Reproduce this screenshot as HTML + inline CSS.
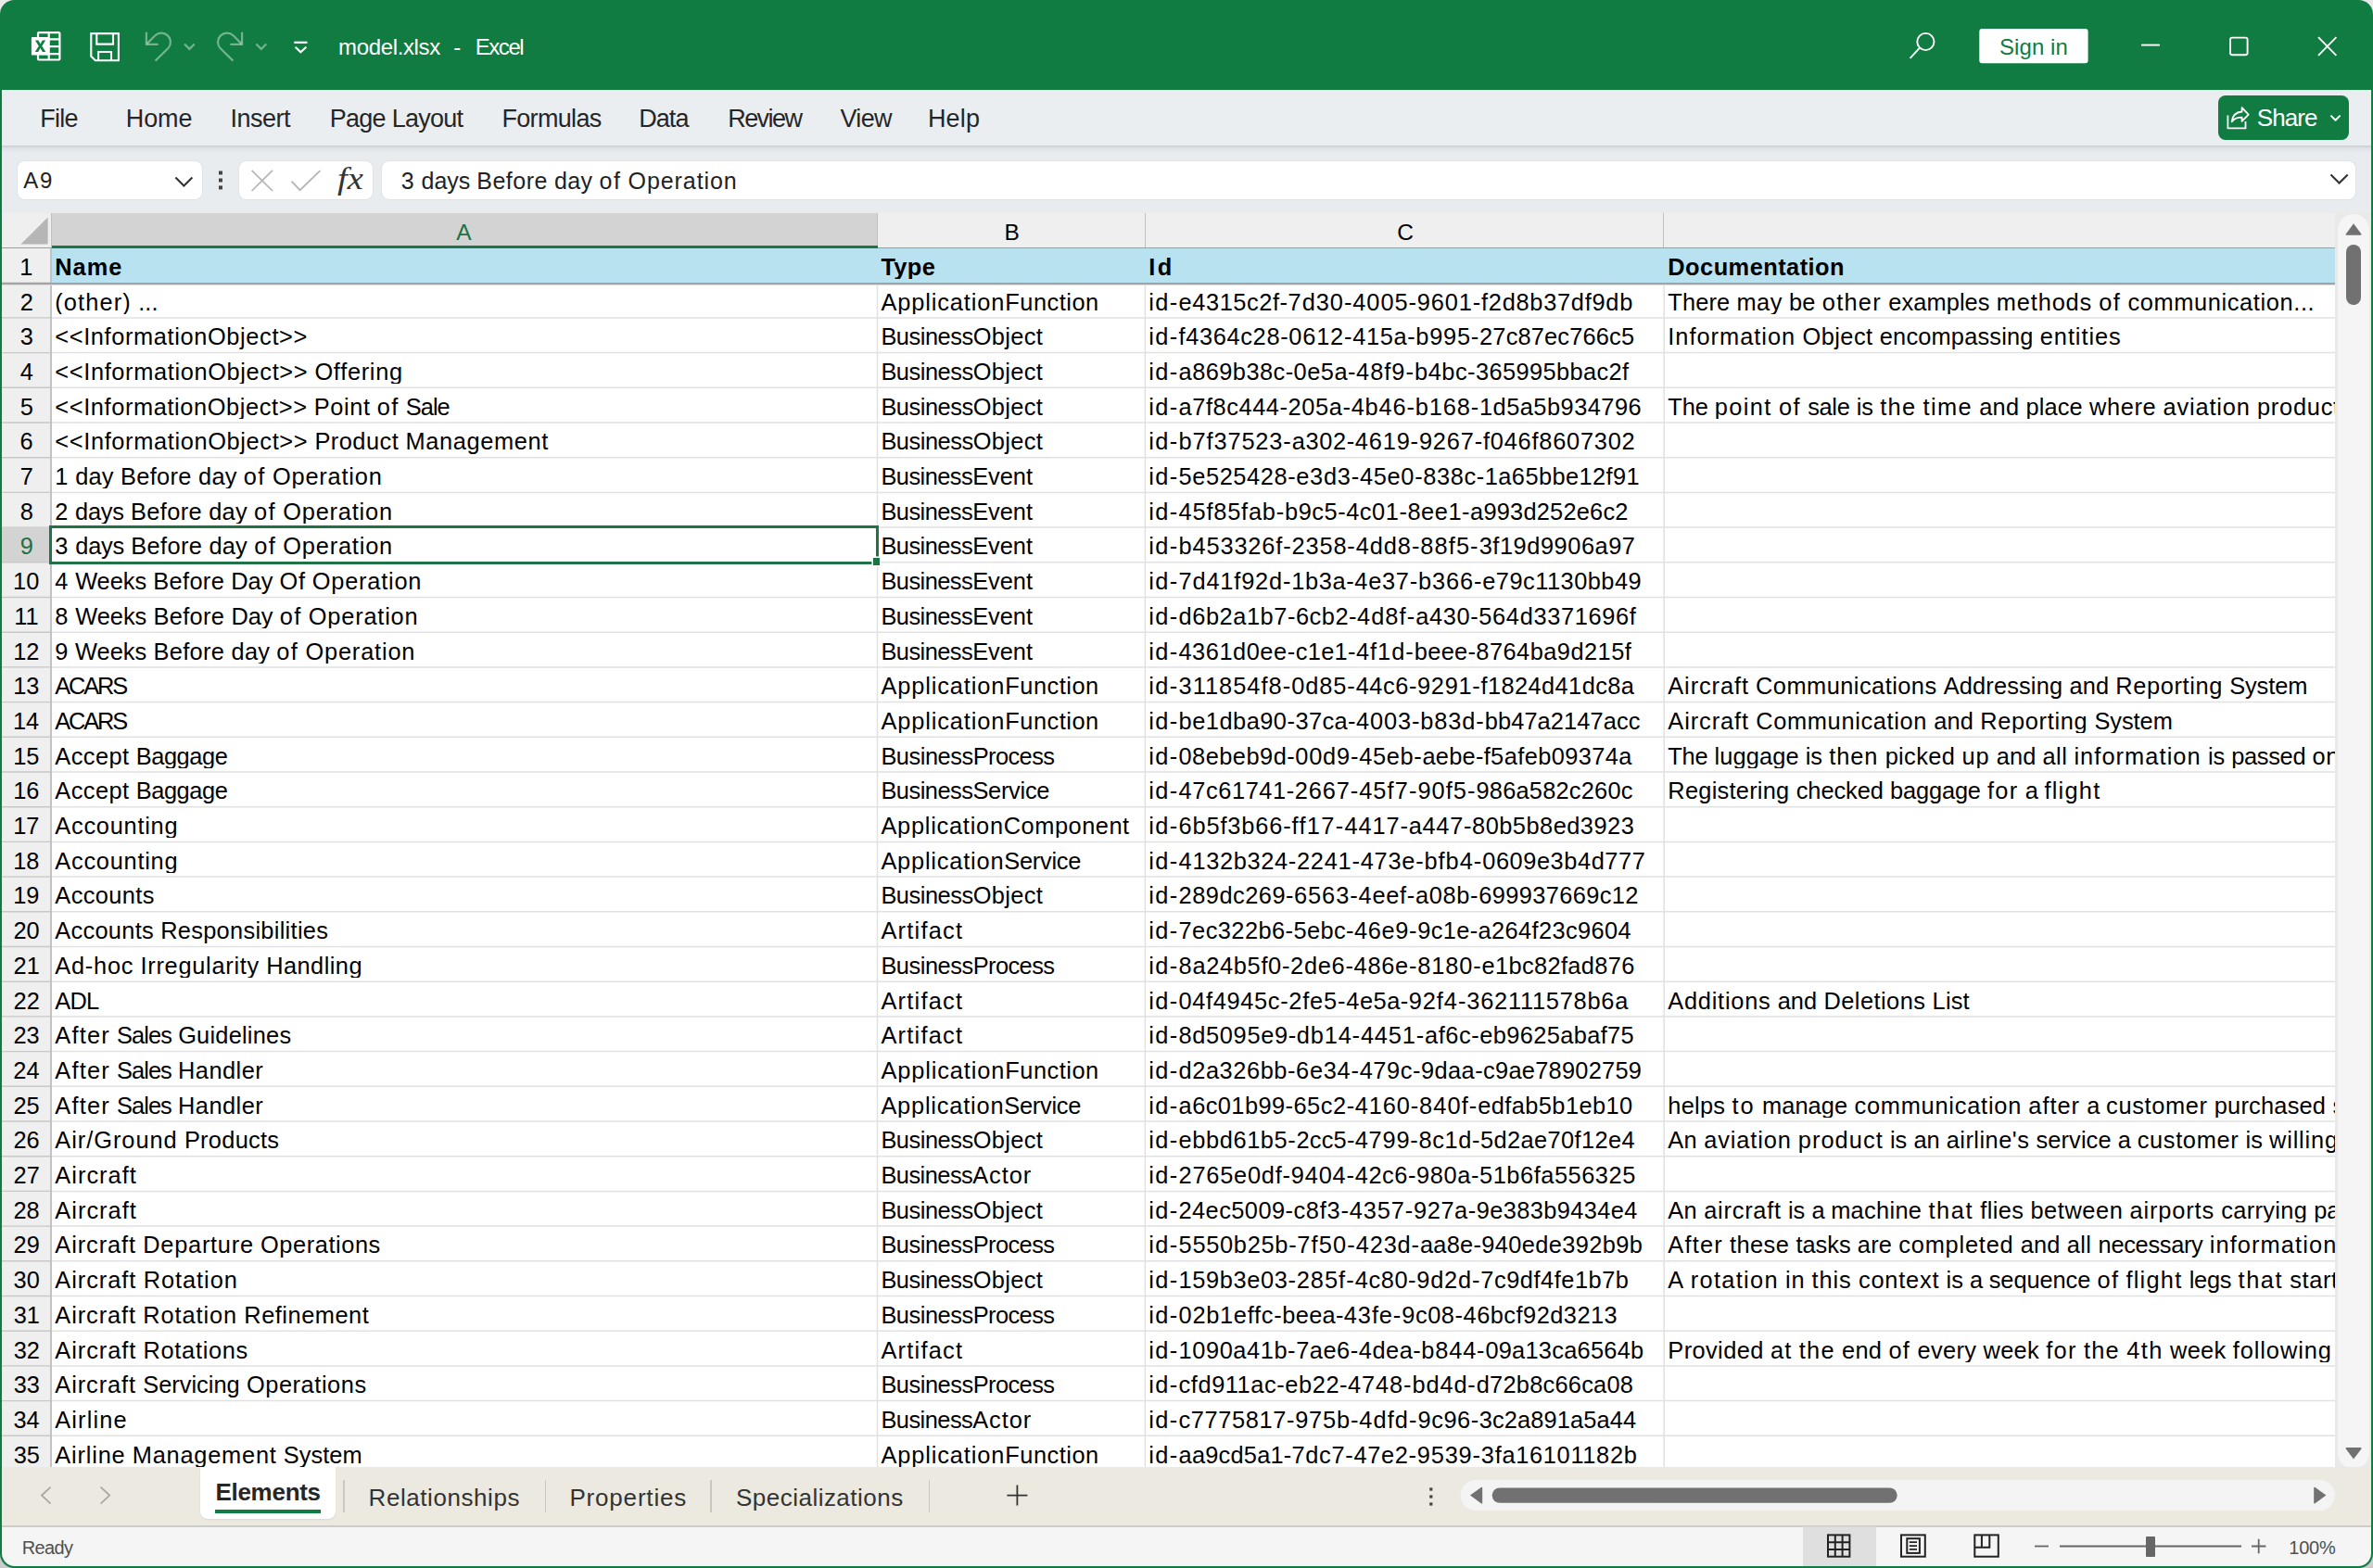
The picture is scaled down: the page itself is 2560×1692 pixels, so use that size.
<!DOCTYPE html>
<html><head><meta charset="utf-8"><title>model.xlsx - Excel</title>
<style>
html,body{margin:0;padding:0;}
body{width:2560px;height:1692px;overflow:hidden;background:linear-gradient(#e9e9e9,#e9e9e9 50%,#cbcbcb 50%);font-family:"Liberation Sans", sans-serif;position:relative;}
.win{position:absolute;left:0;top:0;width:2560px;height:1692px;border-radius:15.5px;overflow:hidden;background:#107c41;}
.t{position:absolute;white-space:pre;line-height:1;font-family:"Liberation Sans", sans-serif;}
svg{position:absolute;overflow:visible;}
</style></head>
<body><div class="win">
<div style="position:absolute;left:2px;top:97px;width:2556px;height:133px;background:#ebeef1;"></div>
<div style="position:absolute;left:2px;top:157px;width:2556px;height:8px;background:linear-gradient(#cbcfd3,#dfe2e6 40%,#e9ecef);"></div>
<div style="position:absolute;left:2px;top:165px;width:2556px;height:65px;background:#e9ecef;"></div>
<svg style="left:0;top:0" width="400" height="97" viewBox="0 0 400 97" fill="none">
<!-- excel icon -->
<g stroke="#fff" stroke-width="2.2">
<rect x="41" y="35.1" width="23.4" height="29.4" rx="1"/>
<line x1="52.7" y1="35" x2="52.7" y2="65"/>
<line x1="41" y1="42.3" x2="64" y2="42.3"/>
<line x1="41" y1="50.2" x2="64" y2="50.2"/>
<line x1="41" y1="58.2" x2="64" y2="58.2"/>
</g>
<rect x="33.9" y="39.9" width="18.9" height="19.6" rx="1" fill="#fff"/>
<path d="M38 43.6 L41.4 43.6 L43.6 47.6 L45.8 43.6 L49.1 43.6 L45.3 49.7 L49.3 56 L45.9 56 L43.5 51.8 L41.2 56 L37.8 56 L41.8 49.8 Z" fill="#107c41"/>
<!-- save icon -->
<g stroke="#fff" stroke-width="2.1">
<path d="M98.3 36.1 H127.9 V65.3 H102.9 L98.3 60.7 Z"/>
<path d="M104.3 36 V47.6 H122 V36"/>
<path d="M106.1 65.3 V56 H120 V65.3"/>
</g>
<!-- undo -->
<g stroke="#fff" stroke-opacity="0.42" stroke-width="2.2">
<path d="M157.9 34.8 V47.8 H170.6"/>
<path d="M158.6 47.1 L167.4 38.3 A9.8 9.8 0 0 1 181.4 52 L167.6 65.6"/>
<path d="M199 47.5 L204.4 52.9 L209.8 47.5"/>
<path d="M261.1 34.8 V47.8 H248.4"/>
<path d="M260.4 47.1 L251.6 38.3 A9.8 9.8 0 0 0 237.6 52 L251.4 65.6"/>
<path d="M276.4 47.5 L281.8 52.9 L287.2 47.5"/>
</g>
<!-- customize -->
<g stroke="#fff" stroke-width="2.2">
<path d="M317.3 45.8 H331.5"/>
<path d="M318.6 50.8 L324.4 56.2 L330.3 50.8"/>
</g>
</svg>
<svg style="left:2040px;top:0" width="520" height="97" viewBox="2040 0 520 97" fill="none">
<g stroke="#fff" stroke-width="1.9">
<circle cx="2077.4" cy="45" r="9.1"/>
<path d="M2071 51.6 L2060.6 62.8"/>
<path d="M2310 48.6 H2330"/>
<rect x="2406" y="40.6" width="18.6" height="18.6" rx="2.2"/>
<path d="M2501 40.2 L2520.4 59.8 M2520.4 40.2 L2501 59.8"/>
</g>
<rect x="2135.3" y="30.9" width="117.3" height="37.3" rx="3" fill="#fff"/>
</svg>
<div style="position:absolute;left:2393px;top:103px;width:141px;height:48px;background:#107c41;border-radius:8px;"></div>
<svg style="left:2393px;top:103px" width="141" height="48" viewBox="2393 103 141 48" fill="none">
<g stroke="#fff" stroke-width="1.8" stroke-linejoin="round">
<path d="M2403.4 124.4 V138.4 H2422.5 V131"/>
<path d="M2418.6 116.1 L2425.7 123.6 L2418.6 130.9 V126.7 C2413.6 126.7 2409.9 128.3 2407.6 131.4 C2408.2 125.3 2412.1 121.1 2418.6 120.5 Z"/>
<path d="M2514.4 124.6 L2519.5 129.7 L2524.6 124.6" stroke-width="2"/>
</g></svg>
<div style="position:absolute;left:18.5px;top:173.5px;width:199px;height:41.5px;background:#fff;border-radius:8px;box-shadow:0 0 0 1px #dfe2e6;"></div>
<div style="position:absolute;left:258px;top:173.5px;width:144px;height:41.5px;background:#fff;border-radius:8px;box-shadow:0 0 0 1px #dfe2e6;"></div>
<div style="position:absolute;left:411.6px;top:173.5px;width:2129.7px;height:41.5px;background:#fff;border-radius:8px;box-shadow:0 0 0 1px #dfe2e6;"></div>
<svg style="left:0;top:157px" width="2560" height="73" viewBox="0 157 2560 73" fill="none">
<path d="M189.4 191.4 L198.4 200.4 L207.4 191.4" stroke="#333" stroke-width="2.1"/>
<g fill="#444"><rect x="236" y="184.5" width="4" height="4"/><rect x="236" y="192.5" width="4" height="4"/><rect x="236" y="200.4" width="4" height="4"/></g>
<g stroke="#b4b4b4" stroke-width="1.7">
<path d="M271.6 183.9 L294 206 M294 183.9 L271.6 206"/>
<path d="M314.6 195.6 L323.6 205.2 L345.4 184.2"/>
</g>
<path d="M2514.5 188.4 L2523.6 197.5 L2532.7 188.4" stroke="#333" stroke-width="2.1"/>
</svg>
<div class="t" style="left:363.5px;top:176.81px;font-size:33px;color:#333;font-style:italic;font-family:'Liberation Serif',serif;transform:scaleX(1.17);transform-origin:0 0;">fx</div>
<div style="position:absolute;left:2px;top:230px;width:2517.2px;height:1353px;background:#fff;"></div>
<div style="position:absolute;left:2px;top:230px;width:2517.2px;height:37.5px;background:#efefef;"></div>
<div style="position:absolute;left:2px;top:230px;width:53.6px;height:1353px;background:#efefef;"></div>
<div style="position:absolute;left:55.6px;top:230px;width:891.1px;height:37.5px;background:#d3d3d3;"></div>
<div style="position:absolute;left:55.6px;top:268px;width:2463.6px;height:37.5px;background:#b9e2f0;"></div>
<svg style="left:0;top:0" width="2560" height="1692" viewBox="0 0 2560 1692" fill="none"><path d="M55.6 342.90H2519.2M55.6 380.60H2519.2M55.6 418.30H2519.2M55.6 456.00H2519.2M55.6 493.70H2519.2M55.6 531.40H2519.2M55.6 569.10H2519.2M55.6 606.80H2519.2M55.6 644.50H2519.2M55.6 682.20H2519.2M55.6 719.90H2519.2M55.6 757.60H2519.2M55.6 795.30H2519.2M55.6 833.00H2519.2M55.6 870.70H2519.2M55.6 908.40H2519.2M55.6 946.10H2519.2M55.6 983.80H2519.2M55.6 1021.50H2519.2M55.6 1059.20H2519.2M55.6 1096.90H2519.2M55.6 1134.60H2519.2M55.6 1172.30H2519.2M55.6 1210.00H2519.2M55.6 1247.70H2519.2M55.6 1285.40H2519.2M55.6 1323.10H2519.2M55.6 1360.80H2519.2M55.6 1398.50H2519.2M55.6 1436.20H2519.2M55.6 1473.90H2519.2M55.6 1511.60H2519.2M55.6 1549.30H2519.2M946.50 306V1583M1235.40 306V1583M1795.20 306V1583" stroke="#e1e1e1" stroke-width="1.5"/><path d="M2 305.20H54.6M2 342.90H54.6M2 380.60H54.6M2 418.30H54.6M2 456.00H54.6M2 493.70H54.6M2 531.40H54.6M2 569.10H54.6M2 606.80H54.6M2 644.50H54.6M2 682.20H54.6M2 719.90H54.6M2 757.60H54.6M2 795.30H54.6M2 833.00H54.6M2 870.70H54.6M2 908.40H54.6M2 946.10H54.6M2 983.80H54.6M2 1021.50H54.6M2 1059.20H54.6M2 1096.90H54.6M2 1134.60H54.6M2 1172.30H54.6M2 1210.00H54.6M2 1247.70H54.6M2 1285.40H54.6M2 1323.10H54.6M2 1360.80H54.6M2 1398.50H54.6M2 1436.20H54.6M2 1473.90H54.6M2 1511.60H54.6M2 1549.30H54.6" stroke="#c8c8c8" stroke-width="1.4"/></svg>
<div style="position:absolute;left:2px;top:569.9px;width:52.0px;height:36.1px;background:#d3d3d3;"></div>
<div style="position:absolute;left:54.0px;top:267.5px;width:1.6px;height:1315.5px;background:#c2c2c2;"></div>
<div style="position:absolute;left:55px;top:230px;width:1px;height:37.5px;background:#c0c0c0;"></div>
<div style="position:absolute;left:946px;top:230px;width:1px;height:37.5px;background:#c0c0c0;"></div>
<div style="position:absolute;left:1235px;top:230px;width:1px;height:37.5px;background:#c0c0c0;"></div>
<div style="position:absolute;left:1794px;top:230px;width:1px;height:37.5px;background:#c0c0c0;"></div>
<div style="position:absolute;left:2px;top:267px;width:2517.2px;height:1px;background:#9d9d9d;"></div>
<div style="position:absolute;left:55.6px;top:264.6px;width:891.1px;height:3.2px;background:#1f7345;"></div>
<div style="position:absolute;left:2px;top:305px;width:2517.2px;height:2px;background:#a3a3a3;"></div>
<div style="position:absolute;left:2px;top:307px;width:2517.2px;height:1px;background:#dcdcdc;"></div>
<svg style="left:0;top:230px" width="60" height="40" viewBox="0 230 60 40"><path d="M51.6 234.6 V263.6 H22.4 Z" fill="#b6b6b6"/></svg>
<div style="position:absolute;left:52.8px;top:567px;width:889.4px;height:35.8px;border:3.2px solid #1f7345;"></div>
<div style="position:absolute;left:941.8px;top:602.4px;width:7.7px;height:7.7px;background:#1f7345;box-shadow:0 0 0 1.6px #fff;"></div>
<div style="position:absolute;left:2519.2px;top:230px;width:38.8px;height:1353px;background:#e9eae7;"></div>
<div style="position:absolute;left:2522px;top:230.5px;width:34px;height:1354px;background:#f5f5f5;border-radius:17px;"></div>
<div style="position:absolute;left:2531px;top:264px;width:16px;height:64.6px;background:#717171;border-radius:8px;"></div>
<svg style="left:2520px;top:230px" width="40" height="1360" viewBox="2520 230 40 1360">
<path d="M2539 241.2 L2547.4 252.4 Q2548 253.8 2546.4 253.8 H2531.6 Q2530 253.8 2530.8 252.4 Z" fill="#717171"/>
<path d="M2539 1574.6 L2547.4 1563.4 Q2548 1562 2546.4 1562 H2531.6 Q2530 1562 2530.8 1563.4 Z" fill="#717171"/>
</svg>
<div style="position:absolute;left:2px;top:1583px;width:2556px;height:64px;background:#ebe9e0;"></div>
<div style="position:absolute;left:2px;top:1646px;width:2556px;height:1.5px;background:#cdccc6;"></div>
<div style="position:absolute;left:2px;top:1647.5px;width:2556px;height:42.5px;background:#f5f5f5;border-radius:0 0 14px 14px;"></div>
<div style="position:absolute;left:215.7px;top:1583px;width:146.5px;height:55.6px;background:#fff;border-radius:0 0 8px 8px;box-shadow:0 1px 2px rgba(0,0,0,0.08);"></div>
<div style="position:absolute;left:232px;top:1628.8px;width:114.3px;height:4px;background:#107c41;"></div>
<div style="position:absolute;left:370.25px;top:1597px;width:1.5px;height:35px;background:#c9c7c0;"></div>
<div style="position:absolute;left:587.55px;top:1597px;width:1.5px;height:35px;background:#c9c7c0;"></div>
<div style="position:absolute;left:766.15px;top:1597px;width:1.5px;height:35px;background:#c9c7c0;"></div>
<div style="position:absolute;left:1001.55px;top:1597px;width:1.5px;height:35px;background:#c9c7c0;"></div>
<svg style="left:0;top:1583px" width="2560" height="109" viewBox="0 1583 2560 109" fill="none">
<g stroke="#a9a7a1" stroke-width="1.8"><path d="M54.6 1604.6 L45 1613.6 L54.6 1622.6"/><path d="M108.6 1604.6 L118.2 1613.6 L108.6 1622.6"/></g>
<g stroke="#333" stroke-width="1.8"><path d="M1086.4 1613.6 H1108.4 M1097.4 1602.6 V1624.6"/></g>
<g fill="#444"><rect x="1542.2" y="1605.4" width="3.2" height="3.2"/><rect x="1542.2" y="1613.4" width="3.2" height="3.2"/><rect x="1542.2" y="1621.4" width="3.2" height="3.2"/></g>
<rect x="1575.6" y="1597" width="943.3" height="33" rx="16.5" fill="#f4f4f4"/>
<rect x="1609.7" y="1605.4" width="437" height="16.4" rx="8.2" fill="#717171"/>
<path d="M1586 1613.6 L1597.8 1605 Q1599.2 1604.2 1599.2 1605.8 V1621.4 Q1599.2 1623 1597.8 1622.2 Z" fill="#717171"/>
<path d="M2509.4 1613.6 L2497.6 1605 Q2496.2 1604.2 2496.2 1605.8 V1621.4 Q2496.2 1623 2497.6 1622.2 Z" fill="#717171"/>
<!-- status bar -->
<rect x="1945" y="1647.5" width="79" height="42.5" fill="#dfdfdf"/>
<g stroke="#222" stroke-width="2">
<rect x="1972" y="1656.4" width="23.4" height="23.3"/>
<path d="M1979.8 1656.4 V1679.7 M1987.6 1656.4 V1679.7 M1972 1664.2 H1995.4 M1972 1671.9 H1995.4"/>
<rect x="2051" y="1656.4" width="25.8" height="23.3"/>
<rect x="2057.3" y="1660.2" width="13.6" height="15.7"/>
<path d="M2059.8 1664.2 H2068 M2059.8 1668.1 H2068 M2059.8 1671.9 H2068" stroke-width="1.7"/>
<rect x="2130.3" y="1656.4" width="25.5" height="23.3"/>
<path d="M2130.3 1669.7 H2146.3 V1656.4 M2137.9 1656.4 V1669.7"/>
</g>
<g stroke="#666" stroke-width="1.8">
<path d="M2195 1668.5 H2210"/>
<path d="M2222 1668.5 H2418"/>
<path d="M2429 1668.5 H2444.4 M2436.7 1660.8 V1676.2"/>
</g>
<rect x="2315" y="1658" width="10" height="22" rx="1" fill="#666"/>
</svg>
<div class="t" style="left:365.11px;top:39.38px;font-size:24px;color:#fff;letter-spacing:-0.368px;">model.xlsx</div>
<div class="t" style="left:489.33px;top:39.38px;font-size:24px;color:#fff;">-</div>
<div class="t" style="left:512.73px;top:39.38px;font-size:24px;color:#fff;letter-spacing:-1.428px;">Excel</div>
<div class="t" style="left:2156.91px;top:39.08px;font-size:24px;color:#107c41;letter-spacing:0.094px;">Sign in</div>
<div class="t" style="left:43.29px;top:114.84px;font-size:27px;color:#262626;letter-spacing:-0.730px;">File</div>
<div class="t" style="left:135.79px;top:114.84px;font-size:27px;color:#262626;letter-spacing:-0.102px;">Home</div>
<div class="t" style="left:248.41px;top:114.84px;font-size:27px;color:#262626;letter-spacing:-0.507px;">Insert</div>
<div class="t" style="left:355.69px;top:114.84px;font-size:27px;color:#262626;letter-spacing:-0.721px;">Page Layout</div>
<div class="t" style="left:541.39px;top:114.84px;font-size:27px;color:#262626;letter-spacing:-0.662px;">Formulas</div>
<div class="t" style="left:689.29px;top:114.84px;font-size:27px;color:#262626;letter-spacing:-0.972px;">Data</div>
<div class="t" style="left:785.19px;top:114.84px;font-size:27px;color:#262626;letter-spacing:-1.556px;">Review</div>
<div class="t" style="left:906.38px;top:114.84px;font-size:27px;color:#262626;letter-spacing:-0.627px;">View</div>
<div class="t" style="left:1000.99px;top:114.84px;font-size:27px;color:#262626;letter-spacing:0.140px;">Help</div>
<div class="t" style="left:2434.82px;top:114.49px;font-size:26px;color:#fff;letter-spacing:-0.936px;">Share</div>
<div class="t" style="left:25.25px;top:183.48px;font-size:24px;color:#222;letter-spacing:1.628px;">A9</div>
<div class="t" style="left:432.65px;top:182.64px;font-size:25px;color:#222;word-spacing:0.233px;"><span style="letter-spacing:0.80px">3</span> <span style="letter-spacing:-0.06px">days</span> <span style="letter-spacing:0.48px">Before</span> <span style="letter-spacing:0.34px">day</span> <span style="letter-spacing:1.45px">of</span> <span style="letter-spacing:0.93px">Operation</span></div>
<div class="t" style="left:492.13px;top:238.56px;font-size:24.5px;color:#1e7145;">A</div>
<div class="t" style="left:1083.47px;top:238.56px;font-size:24.5px;color:#000;">B</div>
<div class="t" style="left:1507.20px;top:238.56px;font-size:24.5px;color:#000;">C</div>
<div class="t" style="left:21.29px;top:275.80px;font-size:25.4px;color:#000;">1</div>
<div class="t" style="left:59.30px;top:275.80px;font-size:25.4px;color:#000;font-weight:bold;width:885.40px;overflow:hidden;letter-spacing:0.971px;">Name</div>
<div class="t" style="left:950.40px;top:275.80px;font-size:25.4px;color:#000;font-weight:bold;width:283.20px;overflow:hidden;letter-spacing:0.331px;">Type</div>
<div class="t" style="left:1239.30px;top:275.80px;font-size:25.4px;color:#000;font-weight:bold;width:554.10px;overflow:hidden;letter-spacing:2.410px;">Id</div>
<div class="t" style="left:1799.30px;top:275.80px;font-size:25.4px;color:#000;font-weight:bold;width:719.90px;overflow:hidden;letter-spacing:0.457px;">Documentation</div>
<div class="t" style="left:21.64px;top:313.50px;font-size:25.4px;color:#000;">2</div>
<div class="t" style="left:59.30px;top:313.50px;font-size:25.4px;color:#000;width:885.40px;overflow:hidden;word-spacing:0.311px;"><span style="letter-spacing:1.11px">(other)</span> <span style="letter-spacing:0.06px">...</span></div>
<div class="t" style="left:950.40px;top:313.50px;font-size:25.4px;color:#000;width:283.20px;overflow:hidden;"><span style="letter-spacing:0.88px">Application</span><span style="letter-spacing:0.49px">Function</span></div>
<div class="t" style="left:1239.30px;top:313.50px;font-size:25.4px;color:#000;width:554.10px;overflow:hidden;"><span style="letter-spacing:1.36px">id-</span><span style="letter-spacing:0.56px">e4315c2f-</span><span style="letter-spacing:0.96px">7d30-</span><span style="letter-spacing:0.90px">4005-</span><span style="letter-spacing:0.86px">9601-</span><span style="letter-spacing:0.72px">f2d8b37df9db</span></div>
<div class="t" style="left:1799.30px;top:313.50px;font-size:25.4px;color:#000;width:719.90px;overflow:hidden;word-spacing:0.156px;"><span style="letter-spacing:0.13px">There</span> <span style="letter-spacing:0.46px">may</span> <span style="letter-spacing:0.14px">be</span> <span style="letter-spacing:1.25px">other</span> <span style="letter-spacing:0.10px">examples</span> <span style="letter-spacing:0.83px">methods</span> <span style="letter-spacing:1.35px">of</span> <span style="letter-spacing:0.62px">communication...</span></div>
<div class="t" style="left:21.71px;top:351.20px;font-size:25.4px;color:#000;">3</div>
<div class="t" style="left:59.30px;top:351.20px;font-size:25.4px;color:#000;width:885.40px;overflow:hidden;letter-spacing:0.617px;">&lt;&lt;InformationObject&gt;&gt;</div>
<div class="t" style="left:950.40px;top:351.20px;font-size:25.4px;color:#000;width:283.20px;overflow:hidden;"><span style="letter-spacing:-0.47px">Business</span><span style="letter-spacing:0.37px">Object</span></div>
<div class="t" style="left:1239.30px;top:351.20px;font-size:25.4px;color:#000;width:554.10px;overflow:hidden;"><span style="letter-spacing:1.34px">id-</span><span style="letter-spacing:0.64px">f4364c28-</span><span style="letter-spacing:0.82px">0612-</span><span style="letter-spacing:0.61px">415a-</span><span style="letter-spacing:0.77px">b995-</span><span style="letter-spacing:0.16px">27c87ec766c5</span></div>
<div class="t" style="left:1799.30px;top:351.20px;font-size:25.4px;color:#000;width:719.90px;overflow:hidden;word-spacing:0.183px;"><span style="letter-spacing:0.99px">Information</span> <span style="letter-spacing:0.45px">Object</span> <span style="letter-spacing:0.17px">encompassing</span> <span style="letter-spacing:0.92px">entities</span></div>
<div class="t" style="left:21.72px;top:388.90px;font-size:25.4px;color:#000;">4</div>
<div class="t" style="left:59.30px;top:388.90px;font-size:25.4px;color:#000;width:885.40px;overflow:hidden;word-spacing:0.121px;"><span style="letter-spacing:0.63px">&lt;&lt;InformationObject&gt;&gt;</span> <span style="letter-spacing:0.68px">Offering</span></div>
<div class="t" style="left:950.40px;top:388.90px;font-size:25.4px;color:#000;width:283.20px;overflow:hidden;"><span style="letter-spacing:-0.47px">Business</span><span style="letter-spacing:0.37px">Object</span></div>
<div class="t" style="left:1239.30px;top:388.90px;font-size:25.4px;color:#000;width:554.10px;overflow:hidden;"><span style="letter-spacing:1.35px">id-</span><span style="letter-spacing:0.44px">a869b38c-</span><span style="letter-spacing:0.51px">0e5a-</span><span style="letter-spacing:1.01px">48f9-</span><span style="letter-spacing:0.52px">b4bc-</span><span style="letter-spacing:0.37px">365995bbac2f</span></div>
<div class="t" style="left:21.66px;top:426.60px;font-size:25.4px;color:#000;">5</div>
<div class="t" style="left:59.30px;top:426.60px;font-size:25.4px;color:#000;width:885.40px;overflow:hidden;word-spacing:0.106px;"><span style="letter-spacing:0.60px">&lt;&lt;InformationObject&gt;&gt;</span> <span style="letter-spacing:0.58px">Point</span> <span style="letter-spacing:1.27px">of</span> <span style="letter-spacing:-0.90px">Sale</span></div>
<div class="t" style="left:950.40px;top:426.60px;font-size:25.4px;color:#000;width:283.20px;overflow:hidden;"><span style="letter-spacing:-0.47px">Business</span><span style="letter-spacing:0.37px">Object</span></div>
<div class="t" style="left:1239.30px;top:426.60px;font-size:25.4px;color:#000;width:554.10px;overflow:hidden;"><span style="letter-spacing:1.35px">id-</span><span style="letter-spacing:0.56px">a7f8c444-</span><span style="letter-spacing:0.63px">205a-</span><span style="letter-spacing:0.84px">4b46-</span><span style="letter-spacing:0.85px">b168-</span><span style="letter-spacing:0.47px">1d5a5b934796</span></div>
<div class="t" style="left:1799.30px;top:426.60px;font-size:25.4px;color:#000;width:719.90px;overflow:hidden;word-spacing:0.158px;"><span style="letter-spacing:-0.15px">The</span> <span style="letter-spacing:1.38px">point</span> <span style="letter-spacing:1.35px">of</span> <span style="letter-spacing:-0.29px">sale</span> <span style="letter-spacing:-0.06px">is</span> <span style="letter-spacing:1.26px">the</span> <span style="letter-spacing:1.40px">time</span> <span style="letter-spacing:0.19px">and</span> <span style="letter-spacing:0.11px">place</span> <span style="letter-spacing:0.63px">where</span> <span style="letter-spacing:0.85px">aviation</span> <span style="letter-spacing:0.74px">products</span> <span style="letter-spacing:0.20px">are</span> <span style="letter-spacing:0.36px">sold</span></div>
<div class="t" style="left:21.55px;top:464.30px;font-size:25.4px;color:#000;">6</div>
<div class="t" style="left:59.30px;top:464.30px;font-size:25.4px;color:#000;width:885.40px;overflow:hidden;word-spacing:0.123px;"><span style="letter-spacing:0.63px">&lt;&lt;InformationObject&gt;&gt;</span> <span style="letter-spacing:0.47px">Product</span> <span style="letter-spacing:0.62px">Management</span></div>
<div class="t" style="left:950.40px;top:464.30px;font-size:25.4px;color:#000;width:283.20px;overflow:hidden;"><span style="letter-spacing:-0.47px">Business</span><span style="letter-spacing:0.37px">Object</span></div>
<div class="t" style="left:1239.30px;top:464.30px;font-size:25.4px;color:#000;width:554.10px;overflow:hidden;"><span style="letter-spacing:1.36px">id-</span><span style="letter-spacing:0.85px">b7f37523-</span><span style="letter-spacing:0.64px">a302-</span><span style="letter-spacing:0.84px">4619-</span><span style="letter-spacing:0.84px">9267-</span><span style="letter-spacing:0.76px">f046f8607302</span></div>
<div class="t" style="left:21.63px;top:502.00px;font-size:25.4px;color:#000;">7</div>
<div class="t" style="left:59.30px;top:502.00px;font-size:25.4px;color:#000;width:885.40px;overflow:hidden;word-spacing:0.158px;"><span style="letter-spacing:0.51px">1</span> <span style="letter-spacing:0.20px">day</span> <span style="letter-spacing:0.35px">Before</span> <span style="letter-spacing:0.20px">day</span> <span style="letter-spacing:1.35px">of</span> <span style="letter-spacing:0.80px">Operation</span></div>
<div class="t" style="left:950.40px;top:502.00px;font-size:25.4px;color:#000;width:283.20px;overflow:hidden;"><span style="letter-spacing:-0.53px">Business</span><span style="letter-spacing:-0.03px">Event</span></div>
<div class="t" style="left:1239.30px;top:502.00px;font-size:25.4px;color:#000;width:554.10px;overflow:hidden;"><span style="letter-spacing:1.34px">id-</span><span style="letter-spacing:0.58px">5e525428-</span><span style="letter-spacing:0.75px">e3d3-</span><span style="letter-spacing:0.70px">45e0-</span><span style="letter-spacing:0.59px">838c-</span><span style="letter-spacing:0.40px">1a65bbe12f91</span></div>
<div class="t" style="left:21.64px;top:539.70px;font-size:25.4px;color:#000;">8</div>
<div class="t" style="left:59.30px;top:539.70px;font-size:25.4px;color:#000;width:885.40px;overflow:hidden;word-spacing:0.161px;"><span style="letter-spacing:0.35px">2</span> <span style="letter-spacing:-0.20px">days</span> <span style="letter-spacing:0.36px">Before</span> <span style="letter-spacing:0.20px">day</span> <span style="letter-spacing:1.36px">of</span> <span style="letter-spacing:0.81px">Operation</span></div>
<div class="t" style="left:950.40px;top:539.70px;font-size:25.4px;color:#000;width:283.20px;overflow:hidden;"><span style="letter-spacing:-0.53px">Business</span><span style="letter-spacing:-0.03px">Event</span></div>
<div class="t" style="left:1239.30px;top:539.70px;font-size:25.4px;color:#000;width:554.10px;overflow:hidden;"><span style="letter-spacing:1.34px">id-</span><span style="letter-spacing:0.80px">45f85fab-</span><span style="letter-spacing:0.52px">b9c5-</span><span style="letter-spacing:0.55px">4c01-</span><span style="letter-spacing:0.54px">8ee1-</span><span style="letter-spacing:0.21px">a993d252e6c2</span></div>
<div class="t" style="left:21.65px;top:577.40px;font-size:25.4px;color:#1e7145;">9</div>
<div class="t" style="left:59.30px;top:577.40px;font-size:25.4px;color:#000;width:885.40px;overflow:hidden;word-spacing:0.155px;"><span style="letter-spacing:0.65px">3</span> <span style="letter-spacing:-0.21px">days</span> <span style="letter-spacing:0.35px">Before</span> <span style="letter-spacing:0.19px">day</span> <span style="letter-spacing:1.35px">of</span> <span style="letter-spacing:0.80px">Operation</span></div>
<div class="t" style="left:950.40px;top:577.40px;font-size:25.4px;color:#000;width:283.20px;overflow:hidden;"><span style="letter-spacing:-0.53px">Business</span><span style="letter-spacing:-0.03px">Event</span></div>
<div class="t" style="left:1239.30px;top:577.40px;font-size:25.4px;color:#000;width:554.10px;overflow:hidden;"><span style="letter-spacing:1.36px">id-</span><span style="letter-spacing:0.83px">b453326f-</span><span style="letter-spacing:0.86px">2358-</span><span style="letter-spacing:0.94px">4dd8-</span><span style="letter-spacing:1.09px">88f5-</span><span style="letter-spacing:0.54px">3f19d9906a97</span></div>
<div class="t" style="left:14.11px;top:615.10px;font-size:25.4px;color:#000;">10</div>
<div class="t" style="left:59.30px;top:615.10px;font-size:25.4px;color:#000;width:885.40px;overflow:hidden;word-spacing:0.143px;"><span style="letter-spacing:0.52px">4</span> <span style="letter-spacing:-0.04px">Weeks</span> <span style="letter-spacing:0.33px">Before</span> <span style="letter-spacing:-0.04px">Day</span> <span style="letter-spacing:0.59px">Of</span> <span style="letter-spacing:0.78px">Operation</span></div>
<div class="t" style="left:950.40px;top:615.10px;font-size:25.4px;color:#000;width:283.20px;overflow:hidden;"><span style="letter-spacing:-0.53px">Business</span><span style="letter-spacing:-0.03px">Event</span></div>
<div class="t" style="left:1239.30px;top:615.10px;font-size:25.4px;color:#000;width:554.10px;overflow:hidden;"><span style="letter-spacing:1.35px">id-</span><span style="letter-spacing:0.81px">7d41f92d-</span><span style="letter-spacing:0.62px">1b3a-</span><span style="letter-spacing:0.74px">4e37-</span><span style="letter-spacing:0.88px">b366-</span><span style="letter-spacing:0.48px">e79c1130bb49</span></div>
<div class="t" style="left:15.17px;top:652.80px;font-size:25.4px;color:#000;">11</div>
<div class="t" style="left:59.30px;top:652.80px;font-size:25.4px;color:#000;width:885.40px;overflow:hidden;word-spacing:0.148px;"><span style="letter-spacing:0.62px">8</span> <span style="letter-spacing:-0.03px">Weeks</span> <span style="letter-spacing:0.33px">Before</span> <span style="letter-spacing:-0.03px">Day</span> <span style="letter-spacing:1.34px">of</span> <span style="letter-spacing:0.79px">Operation</span></div>
<div class="t" style="left:950.40px;top:652.80px;font-size:25.4px;color:#000;width:283.20px;overflow:hidden;"><span style="letter-spacing:-0.53px">Business</span><span style="letter-spacing:-0.03px">Event</span></div>
<div class="t" style="left:1239.30px;top:652.80px;font-size:25.4px;color:#000;width:554.10px;overflow:hidden;"><span style="letter-spacing:1.33px">id-</span><span style="letter-spacing:0.56px">d6b2a1b7-</span><span style="letter-spacing:0.50px">6cb2-</span><span style="letter-spacing:1.06px">4d8f-</span><span style="letter-spacing:0.64px">a430-</span><span style="letter-spacing:0.65px">564d3371696f</span></div>
<div class="t" style="left:14.25px;top:690.50px;font-size:25.4px;color:#000;">12</div>
<div class="t" style="left:59.30px;top:690.50px;font-size:25.4px;color:#000;width:885.40px;overflow:hidden;word-spacing:0.159px;"><span style="letter-spacing:0.43px">9</span> <span style="letter-spacing:-0.00px">Weeks</span> <span style="letter-spacing:0.35px">Before</span> <span style="letter-spacing:0.20px">day</span> <span style="letter-spacing:1.35px">of</span> <span style="letter-spacing:0.81px">Operation</span></div>
<div class="t" style="left:950.40px;top:690.50px;font-size:25.4px;color:#000;width:283.20px;overflow:hidden;"><span style="letter-spacing:-0.53px">Business</span><span style="letter-spacing:-0.03px">Event</span></div>
<div class="t" style="left:1239.30px;top:690.50px;font-size:25.4px;color:#000;width:554.10px;overflow:hidden;"><span style="letter-spacing:1.31px">id-</span><span style="letter-spacing:0.53px">4361d0ee-</span><span style="letter-spacing:0.34px">c1e1-</span><span style="letter-spacing:1.00px">4f1d-</span><span style="letter-spacing:0.32px">beee-</span><span style="letter-spacing:0.47px">8764ba9d215f</span></div>
<div class="t" style="left:14.17px;top:728.20px;font-size:25.4px;color:#000;">13</div>
<div class="t" style="left:59.30px;top:728.20px;font-size:25.4px;color:#000;width:885.40px;overflow:hidden;letter-spacing:-2.153px;">ACARS</div>
<div class="t" style="left:950.40px;top:728.20px;font-size:25.4px;color:#000;width:283.20px;overflow:hidden;"><span style="letter-spacing:0.88px">Application</span><span style="letter-spacing:0.49px">Function</span></div>
<div class="t" style="left:1239.30px;top:728.20px;font-size:25.4px;color:#000;width:554.10px;overflow:hidden;"><span style="letter-spacing:1.34px">id-</span><span style="letter-spacing:1.02px">311854f8-</span><span style="letter-spacing:0.90px">0d85-</span><span style="letter-spacing:0.56px">44c6-</span><span style="letter-spacing:0.72px">9291-</span><span style="letter-spacing:0.40px">f1824d41dc8a</span></div>
<div class="t" style="left:1799.30px;top:728.20px;font-size:25.4px;color:#000;width:719.90px;overflow:hidden;word-spacing:0.133px;"><span style="letter-spacing:0.89px">Aircraft</span> <span style="letter-spacing:0.46px">Communications</span> <span style="letter-spacing:0.14px">Addressing</span> <span style="letter-spacing:0.14px">and</span> <span style="letter-spacing:0.61px">Reporting</span> <span style="letter-spacing:-0.09px">System</span></div>
<div class="t" style="left:13.98px;top:765.90px;font-size:25.4px;color:#000;">14</div>
<div class="t" style="left:59.30px;top:765.90px;font-size:25.4px;color:#000;width:885.40px;overflow:hidden;letter-spacing:-2.153px;">ACARS</div>
<div class="t" style="left:950.40px;top:765.90px;font-size:25.4px;color:#000;width:283.20px;overflow:hidden;"><span style="letter-spacing:0.88px">Application</span><span style="letter-spacing:0.49px">Function</span></div>
<div class="t" style="left:1239.30px;top:765.90px;font-size:25.4px;color:#000;width:554.10px;overflow:hidden;"><span style="letter-spacing:1.35px">id-</span><span style="letter-spacing:0.49px">be1dba90-</span><span style="letter-spacing:0.40px">37ca-</span><span style="letter-spacing:0.89px">4003-</span><span style="letter-spacing:0.89px">b83d-</span><span style="letter-spacing:0.10px">bb47a2147acc</span></div>
<div class="t" style="left:1799.30px;top:765.90px;font-size:25.4px;color:#000;width:719.90px;overflow:hidden;word-spacing:0.150px;"><span style="letter-spacing:0.92px">Aircraft</span> <span style="letter-spacing:0.64px">Communication</span> <span style="letter-spacing:0.18px">and</span> <span style="letter-spacing:0.64px">Reporting</span> <span style="letter-spacing:-0.05px">System</span></div>
<div class="t" style="left:14.14px;top:803.60px;font-size:25.4px;color:#000;">15</div>
<div class="t" style="left:59.30px;top:803.60px;font-size:25.4px;color:#000;width:885.40px;overflow:hidden;word-spacing:0.142px;"><span style="letter-spacing:0.42px">Accept</span> <span style="letter-spacing:-0.41px">Baggage</span></div>
<div class="t" style="left:950.40px;top:803.60px;font-size:25.4px;color:#000;width:283.20px;overflow:hidden;"><span style="letter-spacing:-0.47px">Business</span><span style="letter-spacing:-0.57px">Process</span></div>
<div class="t" style="left:1239.30px;top:803.60px;font-size:25.4px;color:#000;width:554.10px;overflow:hidden;"><span style="letter-spacing:1.31px">id-</span><span style="letter-spacing:0.48px">08ebeb9d-</span><span style="letter-spacing:0.83px">00d9-</span><span style="letter-spacing:0.63px">45eb-</span><span style="letter-spacing:0.26px">aebe-</span><span style="letter-spacing:0.41px">f5afeb09374a</span></div>
<div class="t" style="left:1799.30px;top:803.60px;font-size:25.4px;color:#000;width:719.90px;overflow:hidden;word-spacing:0.125px;"><span style="letter-spacing:-0.21px">The</span> <span style="letter-spacing:0.09px">luggage</span> <span style="letter-spacing:-0.10px">is</span> <span style="letter-spacing:0.97px">then</span> <span style="letter-spacing:0.36px">picked</span> <span style="letter-spacing:0.92px">up</span> <span style="letter-spacing:0.13px">and</span> <span style="letter-spacing:0.39px">all</span> <span style="letter-spacing:1.07px">information</span> <span style="letter-spacing:-0.10px">is</span> <span style="letter-spacing:-0.32px">passed</span> <span style="letter-spacing:0.69px">on</span> <span style="letter-spacing:2.02px">to</span> <span style="letter-spacing:1.20px">the</span> <span style="letter-spacing:0.60px">next</span></div>
<div class="t" style="left:14.17px;top:841.30px;font-size:25.4px;color:#000;">16</div>
<div class="t" style="left:59.30px;top:841.30px;font-size:25.4px;color:#000;width:885.40px;overflow:hidden;word-spacing:0.142px;"><span style="letter-spacing:0.42px">Accept</span> <span style="letter-spacing:-0.41px">Baggage</span></div>
<div class="t" style="left:950.40px;top:841.30px;font-size:25.4px;color:#000;width:283.20px;overflow:hidden;"><span style="letter-spacing:-0.50px">Business</span><span style="letter-spacing:-0.27px">Service</span></div>
<div class="t" style="left:1239.30px;top:841.30px;font-size:25.4px;color:#000;width:554.10px;overflow:hidden;"><span style="letter-spacing:1.35px">id-</span><span style="letter-spacing:0.58px">47c61741-</span><span style="letter-spacing:0.88px">2667-</span><span style="letter-spacing:1.08px">45f7-</span><span style="letter-spacing:1.04px">90f5-</span><span style="letter-spacing:0.21px">986a582c260c</span></div>
<div class="t" style="left:1799.30px;top:841.30px;font-size:25.4px;color:#000;width:719.90px;overflow:hidden;word-spacing:0.129px;"><span style="letter-spacing:0.25px">Registering</span> <span style="letter-spacing:-0.05px">checked</span> <span style="letter-spacing:-0.16px">baggage</span> <span style="letter-spacing:1.28px">for</span> <span style="letter-spacing:-0.54px">a</span> <span style="letter-spacing:1.23px">flight</span></div>
<div class="t" style="left:14.25px;top:879.00px;font-size:25.4px;color:#000;">17</div>
<div class="t" style="left:59.30px;top:879.00px;font-size:25.4px;color:#000;width:885.40px;overflow:hidden;letter-spacing:0.734px;">Accounting</div>
<div class="t" style="left:950.40px;top:879.00px;font-size:25.4px;color:#000;width:283.20px;overflow:hidden;"><span style="letter-spacing:0.74px">Application</span><span style="letter-spacing:0.51px">Component</span></div>
<div class="t" style="left:1239.30px;top:879.00px;font-size:25.4px;color:#000;width:554.10px;overflow:hidden;"><span style="letter-spacing:1.35px">id-</span><span style="letter-spacing:0.84px">6b5f3b66-</span><span style="letter-spacing:1.34px">ff17-</span><span style="letter-spacing:0.86px">4417-</span><span style="letter-spacing:0.66px">a447-</span><span style="letter-spacing:0.48px">80b5b8ed3923</span></div>
<div class="t" style="left:14.16px;top:916.70px;font-size:25.4px;color:#000;">18</div>
<div class="t" style="left:59.30px;top:916.70px;font-size:25.4px;color:#000;width:885.40px;overflow:hidden;letter-spacing:0.734px;">Accounting</div>
<div class="t" style="left:950.40px;top:916.70px;font-size:25.4px;color:#000;width:283.20px;overflow:hidden;"><span style="letter-spacing:0.79px">Application</span><span style="letter-spacing:-0.26px">Service</span></div>
<div class="t" style="left:1239.30px;top:916.70px;font-size:25.4px;color:#000;width:554.10px;overflow:hidden;"><span style="letter-spacing:1.36px">id-</span><span style="letter-spacing:0.66px">4132b324-</span><span style="letter-spacing:0.75px">2241-</span><span style="letter-spacing:0.75px">473e-</span><span style="letter-spacing:1.00px">bfb4-</span><span style="letter-spacing:0.55px">0609e3b4d777</span></div>
<div class="t" style="left:14.21px;top:954.40px;font-size:25.4px;color:#000;">19</div>
<div class="t" style="left:59.30px;top:954.40px;font-size:25.4px;color:#000;width:885.40px;overflow:hidden;letter-spacing:0.397px;">Accounts</div>
<div class="t" style="left:950.40px;top:954.40px;font-size:25.4px;color:#000;width:283.20px;overflow:hidden;"><span style="letter-spacing:-0.47px">Business</span><span style="letter-spacing:0.37px">Object</span></div>
<div class="t" style="left:1239.30px;top:954.40px;font-size:25.4px;color:#000;width:554.10px;overflow:hidden;"><span style="letter-spacing:1.34px">id-</span><span style="letter-spacing:0.50px">289dc269-</span><span style="letter-spacing:0.91px">6563-</span><span style="letter-spacing:0.72px">4eef-</span><span style="letter-spacing:0.64px">a08b-</span><span style="letter-spacing:0.39px">699937669c12</span></div>
<div class="t" style="left:14.44px;top:992.10px;font-size:25.4px;color:#000;">20</div>
<div class="t" style="left:59.30px;top:992.10px;font-size:25.4px;color:#000;width:885.40px;overflow:hidden;word-spacing:0.125px;"><span style="letter-spacing:0.28px">Accounts</span> <span style="letter-spacing:0.29px">Responsibilities</span></div>
<div class="t" style="left:950.40px;top:992.10px;font-size:25.4px;color:#000;width:283.20px;overflow:hidden;letter-spacing:1.225px;">Artifact</div>
<div class="t" style="left:1239.30px;top:992.10px;font-size:25.4px;color:#000;width:554.10px;overflow:hidden;"><span style="letter-spacing:1.34px">id-</span><span style="letter-spacing:0.43px">7ec322b6-</span><span style="letter-spacing:0.39px">5ebc-</span><span style="letter-spacing:0.67px">46e9-</span><span style="letter-spacing:0.36px">9c1e-</span><span style="letter-spacing:0.38px">a264f23c9604</span></div>
<div class="t" style="left:14.56px;top:1029.80px;font-size:25.4px;color:#000;">21</div>
<div class="t" style="left:59.30px;top:1029.80px;font-size:25.4px;color:#000;width:885.40px;overflow:hidden;word-spacing:0.147px;"><span style="letter-spacing:0.76px">Ad-hoc</span> <span style="letter-spacing:0.71px">Irregularity</span> <span style="letter-spacing:0.45px">Handling</span></div>
<div class="t" style="left:950.40px;top:1029.80px;font-size:25.4px;color:#000;width:283.20px;overflow:hidden;"><span style="letter-spacing:-0.47px">Business</span><span style="letter-spacing:-0.57px">Process</span></div>
<div class="t" style="left:1239.30px;top:1029.80px;font-size:25.4px;color:#000;width:554.10px;overflow:hidden;"><span style="letter-spacing:1.35px">id-</span><span style="letter-spacing:0.68px">8a24b5f0-</span><span style="letter-spacing:0.71px">2de6-</span><span style="letter-spacing:0.73px">486e-</span><span style="letter-spacing:0.88px">8180-</span><span style="letter-spacing:0.36px">e1bc82fad876</span></div>
<div class="t" style="left:14.58px;top:1067.50px;font-size:25.4px;color:#000;">22</div>
<div class="t" style="left:59.30px;top:1067.50px;font-size:25.4px;color:#000;width:885.40px;overflow:hidden;letter-spacing:-0.775px;">ADL</div>
<div class="t" style="left:950.40px;top:1067.50px;font-size:25.4px;color:#000;width:283.20px;overflow:hidden;letter-spacing:1.225px;">Artifact</div>
<div class="t" style="left:1239.30px;top:1067.50px;font-size:25.4px;color:#000;width:554.10px;overflow:hidden;"><span style="letter-spacing:1.34px">id-</span><span style="letter-spacing:0.64px">04f4945c-</span><span style="letter-spacing:0.84px">2fe5-</span><span style="letter-spacing:0.48px">4e5a-</span><span style="letter-spacing:0.95px">92f4-</span><span style="letter-spacing:0.76px">362111578b6a</span></div>
<div class="t" style="left:1799.30px;top:1067.50px;font-size:25.4px;color:#000;width:719.90px;overflow:hidden;word-spacing:0.101px;"><span style="letter-spacing:0.75px">Additions</span> <span style="letter-spacing:0.08px">and</span> <span style="letter-spacing:0.46px">Deletions</span> <span style="letter-spacing:0.18px">List</span></div>
<div class="t" style="left:14.50px;top:1105.20px;font-size:25.4px;color:#000;">23</div>
<div class="t" style="left:59.30px;top:1105.20px;font-size:25.4px;color:#000;width:885.40px;overflow:hidden;word-spacing:0.149px;"><span style="letter-spacing:1.19px">After</span> <span style="letter-spacing:-0.94px">Sales</span> <span style="letter-spacing:0.22px">Guidelines</span></div>
<div class="t" style="left:950.40px;top:1105.20px;font-size:25.4px;color:#000;width:283.20px;overflow:hidden;letter-spacing:1.225px;">Artifact</div>
<div class="t" style="left:1239.30px;top:1105.20px;font-size:25.4px;color:#000;width:554.10px;overflow:hidden;"><span style="letter-spacing:1.35px">id-</span><span style="letter-spacing:0.64px">8d5095e9-</span><span style="letter-spacing:0.84px">db14-</span><span style="letter-spacing:0.84px">4451-</span><span style="letter-spacing:0.57px">af6c-</span><span style="letter-spacing:0.36px">eb9625abaf75</span></div>
<div class="t" style="left:14.31px;top:1142.90px;font-size:25.4px;color:#000;">24</div>
<div class="t" style="left:59.30px;top:1142.90px;font-size:25.4px;color:#000;width:885.40px;overflow:hidden;word-spacing:0.146px;"><span style="letter-spacing:1.19px">After</span> <span style="letter-spacing:-0.95px">Sales</span> <span style="letter-spacing:0.45px">Handler</span></div>
<div class="t" style="left:950.40px;top:1142.90px;font-size:25.4px;color:#000;width:283.20px;overflow:hidden;"><span style="letter-spacing:0.88px">Application</span><span style="letter-spacing:0.49px">Function</span></div>
<div class="t" style="left:1239.30px;top:1142.90px;font-size:25.4px;color:#000;width:554.10px;overflow:hidden;"><span style="letter-spacing:1.35px">id-</span><span style="letter-spacing:0.56px">d2a326bb-</span><span style="letter-spacing:0.73px">6e34-</span><span style="letter-spacing:0.56px">479c-</span><span style="letter-spacing:0.43px">9daa-</span><span style="letter-spacing:0.26px">c9ae78902759</span></div>
<div class="t" style="left:14.47px;top:1180.60px;font-size:25.4px;color:#000;">25</div>
<div class="t" style="left:59.30px;top:1180.60px;font-size:25.4px;color:#000;width:885.40px;overflow:hidden;word-spacing:0.146px;"><span style="letter-spacing:1.19px">After</span> <span style="letter-spacing:-0.95px">Sales</span> <span style="letter-spacing:0.45px">Handler</span></div>
<div class="t" style="left:950.40px;top:1180.60px;font-size:25.4px;color:#000;width:283.20px;overflow:hidden;"><span style="letter-spacing:0.79px">Application</span><span style="letter-spacing:-0.26px">Service</span></div>
<div class="t" style="left:1239.30px;top:1180.60px;font-size:25.4px;color:#000;width:554.10px;overflow:hidden;"><span style="letter-spacing:1.36px">id-</span><span style="letter-spacing:0.42px">a6c01b99-</span><span style="letter-spacing:0.56px">65c2-</span><span style="letter-spacing:0.88px">4160-</span><span style="letter-spacing:1.07px">840f-</span><span style="letter-spacing:0.40px">edfab5b1eb10</span></div>
<div class="t" style="left:1799.30px;top:1180.60px;font-size:25.4px;color:#000;width:719.90px;overflow:hidden;word-spacing:0.139px;"><span style="letter-spacing:0.26px">helps</span> <span style="letter-spacing:2.04px">to</span> <span style="letter-spacing:0.08px">manage</span> <span style="letter-spacing:0.76px">communication</span> <span style="letter-spacing:0.99px">after</span> <span style="letter-spacing:-0.52px">a</span> <span style="letter-spacing:0.64px">customer</span> <span style="letter-spacing:0.20px">purchased</span> <span style="letter-spacing:0.71px">something</span></div>
<div class="t" style="left:14.50px;top:1218.30px;font-size:25.4px;color:#000;">26</div>
<div class="t" style="left:59.30px;top:1218.30px;font-size:25.4px;color:#000;width:885.40px;overflow:hidden;word-spacing:0.152px;"><span style="letter-spacing:0.96px">Air/Ground</span> <span style="letter-spacing:0.28px">Products</span></div>
<div class="t" style="left:950.40px;top:1218.30px;font-size:25.4px;color:#000;width:283.20px;overflow:hidden;"><span style="letter-spacing:-0.47px">Business</span><span style="letter-spacing:0.37px">Object</span></div>
<div class="t" style="left:1239.30px;top:1218.30px;font-size:25.4px;color:#000;width:554.10px;overflow:hidden;"><span style="letter-spacing:1.34px">id-</span><span style="letter-spacing:0.60px">ebbd61b5-</span><span style="letter-spacing:0.23px">2cc5-</span><span style="letter-spacing:0.80px">4799-</span><span style="letter-spacing:0.58px">8c1d-</span><span style="letter-spacing:0.38px">5d2ae70f12e4</span></div>
<div class="t" style="left:1799.30px;top:1218.30px;font-size:25.4px;color:#000;width:719.90px;overflow:hidden;word-spacing:0.152px;"><span style="letter-spacing:0.39px">An</span> <span style="letter-spacing:0.84px">aviation</span> <span style="letter-spacing:1.03px">product</span> <span style="letter-spacing:-0.06px">is</span> <span style="letter-spacing:-0.09px">an</span> <span style="letter-spacing:0.49px">airline&#x27;s</span> <span style="letter-spacing:0.08px">service</span> <span style="letter-spacing:-0.49px">a</span> <span style="letter-spacing:0.66px">customer</span> <span style="letter-spacing:-0.06px">is</span> <span style="letter-spacing:0.83px">willing</span> <span style="letter-spacing:2.06px">to</span> <span style="letter-spacing:0.32px">pay</span></div>
<div class="t" style="left:14.58px;top:1256.00px;font-size:25.4px;color:#000;">27</div>
<div class="t" style="left:59.30px;top:1256.00px;font-size:25.4px;color:#000;width:885.40px;overflow:hidden;letter-spacing:1.025px;">Aircraft</div>
<div class="t" style="left:950.40px;top:1256.00px;font-size:25.4px;color:#000;width:283.20px;overflow:hidden;"><span style="letter-spacing:-0.52px">Business</span><span style="letter-spacing:0.92px">Actor</span></div>
<div class="t" style="left:1239.30px;top:1256.00px;font-size:25.4px;color:#000;width:554.10px;overflow:hidden;"><span style="letter-spacing:1.34px">id-</span><span style="letter-spacing:0.76px">2765e0df-</span><span style="letter-spacing:0.82px">9404-</span><span style="letter-spacing:0.53px">42c6-</span><span style="letter-spacing:0.63px">980a-</span><span style="letter-spacing:0.53px">51b6fa556325</span></div>
<div class="t" style="left:14.49px;top:1293.70px;font-size:25.4px;color:#000;">28</div>
<div class="t" style="left:59.30px;top:1293.70px;font-size:25.4px;color:#000;width:885.40px;overflow:hidden;letter-spacing:1.025px;">Aircraft</div>
<div class="t" style="left:950.40px;top:1293.70px;font-size:25.4px;color:#000;width:283.20px;overflow:hidden;"><span style="letter-spacing:-0.47px">Business</span><span style="letter-spacing:0.37px">Object</span></div>
<div class="t" style="left:1239.30px;top:1293.70px;font-size:25.4px;color:#000;width:554.10px;overflow:hidden;"><span style="letter-spacing:1.33px">id-</span><span style="letter-spacing:0.43px">24ec5009-</span><span style="letter-spacing:0.77px">c8f3-</span><span style="letter-spacing:0.88px">4357-</span><span style="letter-spacing:0.57px">927a-</span><span style="letter-spacing:0.38px">9e383b9434e4</span></div>
<div class="t" style="left:1799.30px;top:1293.70px;font-size:25.4px;color:#000;width:719.90px;overflow:hidden;word-spacing:0.120px;"><span style="letter-spacing:0.32px">An</span> <span style="letter-spacing:0.76px">aircraft</span> <span style="letter-spacing:-0.10px">is</span> <span style="letter-spacing:-0.55px">a</span> <span style="letter-spacing:0.31px">machine</span> <span style="letter-spacing:1.54px">that</span> <span style="letter-spacing:0.37px">flies</span> <span style="letter-spacing:0.56px">between</span> <span style="letter-spacing:0.85px">airports</span> <span style="letter-spacing:0.33px">carrying</span> <span style="letter-spacing:-0.30px">passengers</span></div>
<div class="t" style="left:14.54px;top:1331.40px;font-size:25.4px;color:#000;">29</div>
<div class="t" style="left:59.30px;top:1331.40px;font-size:25.4px;color:#000;width:885.40px;overflow:hidden;word-spacing:0.148px;"><span style="letter-spacing:0.92px">Aircraft</span> <span style="letter-spacing:0.73px">Departure</span> <span style="letter-spacing:0.57px">Operations</span></div>
<div class="t" style="left:950.40px;top:1331.40px;font-size:25.4px;color:#000;width:283.20px;overflow:hidden;"><span style="letter-spacing:-0.47px">Business</span><span style="letter-spacing:-0.57px">Process</span></div>
<div class="t" style="left:1239.30px;top:1331.40px;font-size:25.4px;color:#000;width:554.10px;overflow:hidden;"><span style="letter-spacing:1.35px">id-</span><span style="letter-spacing:0.70px">5550b25b-</span><span style="letter-spacing:1.10px">7f50-</span><span style="letter-spacing:0.85px">423d-</span><span style="letter-spacing:0.29px">aa8e-</span><span style="letter-spacing:0.37px">940ede392b9b</span></div>
<div class="t" style="left:1799.30px;top:1331.40px;font-size:25.4px;color:#000;width:719.90px;overflow:hidden;word-spacing:0.143px;"><span style="letter-spacing:1.18px">After</span> <span style="letter-spacing:0.42px">these</span> <span style="letter-spacing:-0.02px">tasks</span> <span style="letter-spacing:0.18px">are</span> <span style="letter-spacing:0.78px">completed</span> <span style="letter-spacing:0.16px">and</span> <span style="letter-spacing:0.42px">all</span> <span style="letter-spacing:-0.31px">necessary</span> <span style="letter-spacing:1.10px">information</span> <span style="letter-spacing:-0.07px">is</span></div>
<div class="t" style="left:14.59px;top:1369.10px;font-size:25.4px;color:#000;">30</div>
<div class="t" style="left:59.30px;top:1369.10px;font-size:25.4px;color:#000;width:885.40px;overflow:hidden;word-spacing:0.175px;"><span style="letter-spacing:0.96px">Aircraft</span> <span style="letter-spacing:0.95px">Rotation</span></div>
<div class="t" style="left:950.40px;top:1369.10px;font-size:25.4px;color:#000;width:283.20px;overflow:hidden;"><span style="letter-spacing:-0.47px">Business</span><span style="letter-spacing:0.37px">Object</span></div>
<div class="t" style="left:1239.30px;top:1369.10px;font-size:25.4px;color:#000;width:554.10px;overflow:hidden;"><span style="letter-spacing:1.35px">id-</span><span style="letter-spacing:0.63px">159b3e03-</span><span style="letter-spacing:1.02px">285f-</span><span style="letter-spacing:0.60px">4c80-</span><span style="letter-spacing:0.84px">9d2d-</span><span style="letter-spacing:0.52px">7c9df4fe1b7b</span></div>
<div class="t" style="left:1799.30px;top:1369.10px;font-size:25.4px;color:#000;width:719.90px;overflow:hidden;word-spacing:0.129px;"><span style="letter-spacing:0.41px">A</span> <span style="letter-spacing:1.29px">rotation</span> <span style="letter-spacing:0.76px">in</span> <span style="letter-spacing:0.92px">this</span> <span style="letter-spacing:0.80px">context</span> <span style="letter-spacing:-0.09px">is</span> <span style="letter-spacing:-0.54px">a</span> <span style="letter-spacing:-0.07px">sequence</span> <span style="letter-spacing:1.30px">of</span> <span style="letter-spacing:1.23px">flight</span> <span style="letter-spacing:-0.22px">legs</span> <span style="letter-spacing:1.56px">that</span> <span style="letter-spacing:0.61px">starts</span></div>
<div class="t" style="left:14.72px;top:1406.80px;font-size:25.4px;color:#000;">31</div>
<div class="t" style="left:59.30px;top:1406.80px;font-size:25.4px;color:#000;width:885.40px;overflow:hidden;word-spacing:0.150px;"><span style="letter-spacing:0.92px">Aircraft</span> <span style="letter-spacing:0.90px">Rotation</span> <span style="letter-spacing:0.52px">Refinement</span></div>
<div class="t" style="left:950.40px;top:1406.80px;font-size:25.4px;color:#000;width:283.20px;overflow:hidden;"><span style="letter-spacing:-0.47px">Business</span><span style="letter-spacing:-0.57px">Process</span></div>
<div class="t" style="left:1239.30px;top:1406.80px;font-size:25.4px;color:#000;width:554.10px;overflow:hidden;"><span style="letter-spacing:1.35px">id-</span><span style="letter-spacing:0.70px">02b1effc-</span><span style="letter-spacing:0.32px">beea-</span><span style="letter-spacing:0.90px">43fe-</span><span style="letter-spacing:0.57px">9c08-</span><span style="letter-spacing:0.47px">46bcf92d3213</span></div>
<div class="t" style="left:14.73px;top:1444.50px;font-size:25.4px;color:#000;">32</div>
<div class="t" style="left:59.30px;top:1444.50px;font-size:25.4px;color:#000;width:885.40px;overflow:hidden;word-spacing:0.169px;"><span style="letter-spacing:0.95px">Aircraft</span> <span style="letter-spacing:0.68px">Rotations</span></div>
<div class="t" style="left:950.40px;top:1444.50px;font-size:25.4px;color:#000;width:283.20px;overflow:hidden;letter-spacing:1.225px;">Artifact</div>
<div class="t" style="left:1239.30px;top:1444.50px;font-size:25.4px;color:#000;width:554.10px;overflow:hidden;"><span style="letter-spacing:1.35px">id-</span><span style="letter-spacing:0.57px">1090a41b-</span><span style="letter-spacing:0.54px">7ae6-</span><span style="letter-spacing:0.51px">4dea-</span><span style="letter-spacing:0.83px">b844-</span><span style="letter-spacing:0.25px">09a13ca6564b</span></div>
<div class="t" style="left:1799.30px;top:1444.50px;font-size:25.4px;color:#000;width:719.90px;overflow:hidden;word-spacing:0.146px;"><span style="letter-spacing:0.40px">Provided</span> <span style="letter-spacing:1.22px">at</span> <span style="letter-spacing:1.24px">the</span> <span style="letter-spacing:0.27px">end</span> <span style="letter-spacing:1.33px">of</span> <span style="letter-spacing:0.37px">every</span> <span style="letter-spacing:0.27px">week</span> <span style="letter-spacing:1.31px">for</span> <span style="letter-spacing:1.24px">the</span> <span style="letter-spacing:1.48px">4th</span> <span style="letter-spacing:0.27px">week</span> <span style="letter-spacing:0.93px">following</span> <span style="letter-spacing:1.24px">the</span></div>
<div class="t" style="left:14.65px;top:1482.20px;font-size:25.4px;color:#000;">33</div>
<div class="t" style="left:59.30px;top:1482.20px;font-size:25.4px;color:#000;width:885.40px;overflow:hidden;word-spacing:0.143px;"><span style="letter-spacing:0.91px">Aircraft</span> <span style="letter-spacing:0.01px">Servicing</span> <span style="letter-spacing:0.56px">Operations</span></div>
<div class="t" style="left:950.40px;top:1482.20px;font-size:25.4px;color:#000;width:283.20px;overflow:hidden;"><span style="letter-spacing:-0.47px">Business</span><span style="letter-spacing:-0.57px">Process</span></div>
<div class="t" style="left:1239.30px;top:1482.20px;font-size:25.4px;color:#000;width:554.10px;overflow:hidden;"><span style="letter-spacing:1.34px">id-</span><span style="letter-spacing:0.57px">cfd911ac-</span><span style="letter-spacing:0.57px">eb22-</span><span style="letter-spacing:0.87px">4748-</span><span style="letter-spacing:0.87px">bd4d-</span><span style="letter-spacing:0.24px">d72b8c66ca08</span></div>
<div class="t" style="left:14.47px;top:1519.90px;font-size:25.4px;color:#000;">34</div>
<div class="t" style="left:59.30px;top:1519.90px;font-size:25.4px;color:#000;width:885.40px;overflow:hidden;letter-spacing:1.112px;">Airline</div>
<div class="t" style="left:950.40px;top:1519.90px;font-size:25.4px;color:#000;width:283.20px;overflow:hidden;"><span style="letter-spacing:-0.52px">Business</span><span style="letter-spacing:0.92px">Actor</span></div>
<div class="t" style="left:1239.30px;top:1519.90px;font-size:25.4px;color:#000;width:554.10px;overflow:hidden;"><span style="letter-spacing:1.34px">id-</span><span style="letter-spacing:0.62px">c7775817-</span><span style="letter-spacing:0.83px">975b-</span><span style="letter-spacing:1.09px">4dfd-</span><span style="letter-spacing:0.52px">9c96-</span><span style="letter-spacing:0.12px">3c2a891a5a44</span></div>
<div class="t" style="left:14.63px;top:1557.60px;font-size:25.4px;color:#000;">35</div>
<div class="t" style="left:59.30px;top:1557.60px;font-size:25.4px;color:#000;width:885.40px;overflow:hidden;word-spacing:0.188px;"><span style="letter-spacing:0.81px">Airline</span> <span style="letter-spacing:0.76px">Management</span> <span style="letter-spacing:0.02px">System</span></div>
<div class="t" style="left:950.40px;top:1557.60px;font-size:25.4px;color:#000;width:283.20px;overflow:hidden;"><span style="letter-spacing:0.88px">Application</span><span style="letter-spacing:0.49px">Function</span></div>
<div class="t" style="left:1239.30px;top:1557.60px;font-size:25.4px;color:#000;width:554.10px;overflow:hidden;"><span style="letter-spacing:1.36px">id-</span><span style="letter-spacing:0.21px">aa9cd5a1-</span><span style="letter-spacing:0.67px">7dc7-</span><span style="letter-spacing:0.69px">47e2-</span><span style="letter-spacing:0.83px">9539-</span><span style="letter-spacing:0.68px">3fa16101182b</span></div>
<div class="t" style="left:232.46px;top:1597.19px;font-size:26px;color:#262626;font-weight:bold;letter-spacing:-0.285px;">Elements</div>
<div class="t" style="left:397.57px;top:1603.49px;font-size:26px;color:#333;letter-spacing:0.565px;">Relationships</div>
<div class="t" style="left:614.47px;top:1603.49px;font-size:26px;color:#333;letter-spacing:0.808px;">Properties</div>
<div class="t" style="left:794.02px;top:1603.49px;font-size:26px;color:#333;letter-spacing:0.478px;">Specializations</div>
<div class="t" style="left:23.66px;top:1660.17px;font-size:20px;color:#505050;letter-spacing:-0.608px;">Ready</div>
<div class="t" style="left:2469.28px;top:1660.17px;font-size:20px;color:#505050;letter-spacing:-0.239px;">100%</div>
</div></body></html>
